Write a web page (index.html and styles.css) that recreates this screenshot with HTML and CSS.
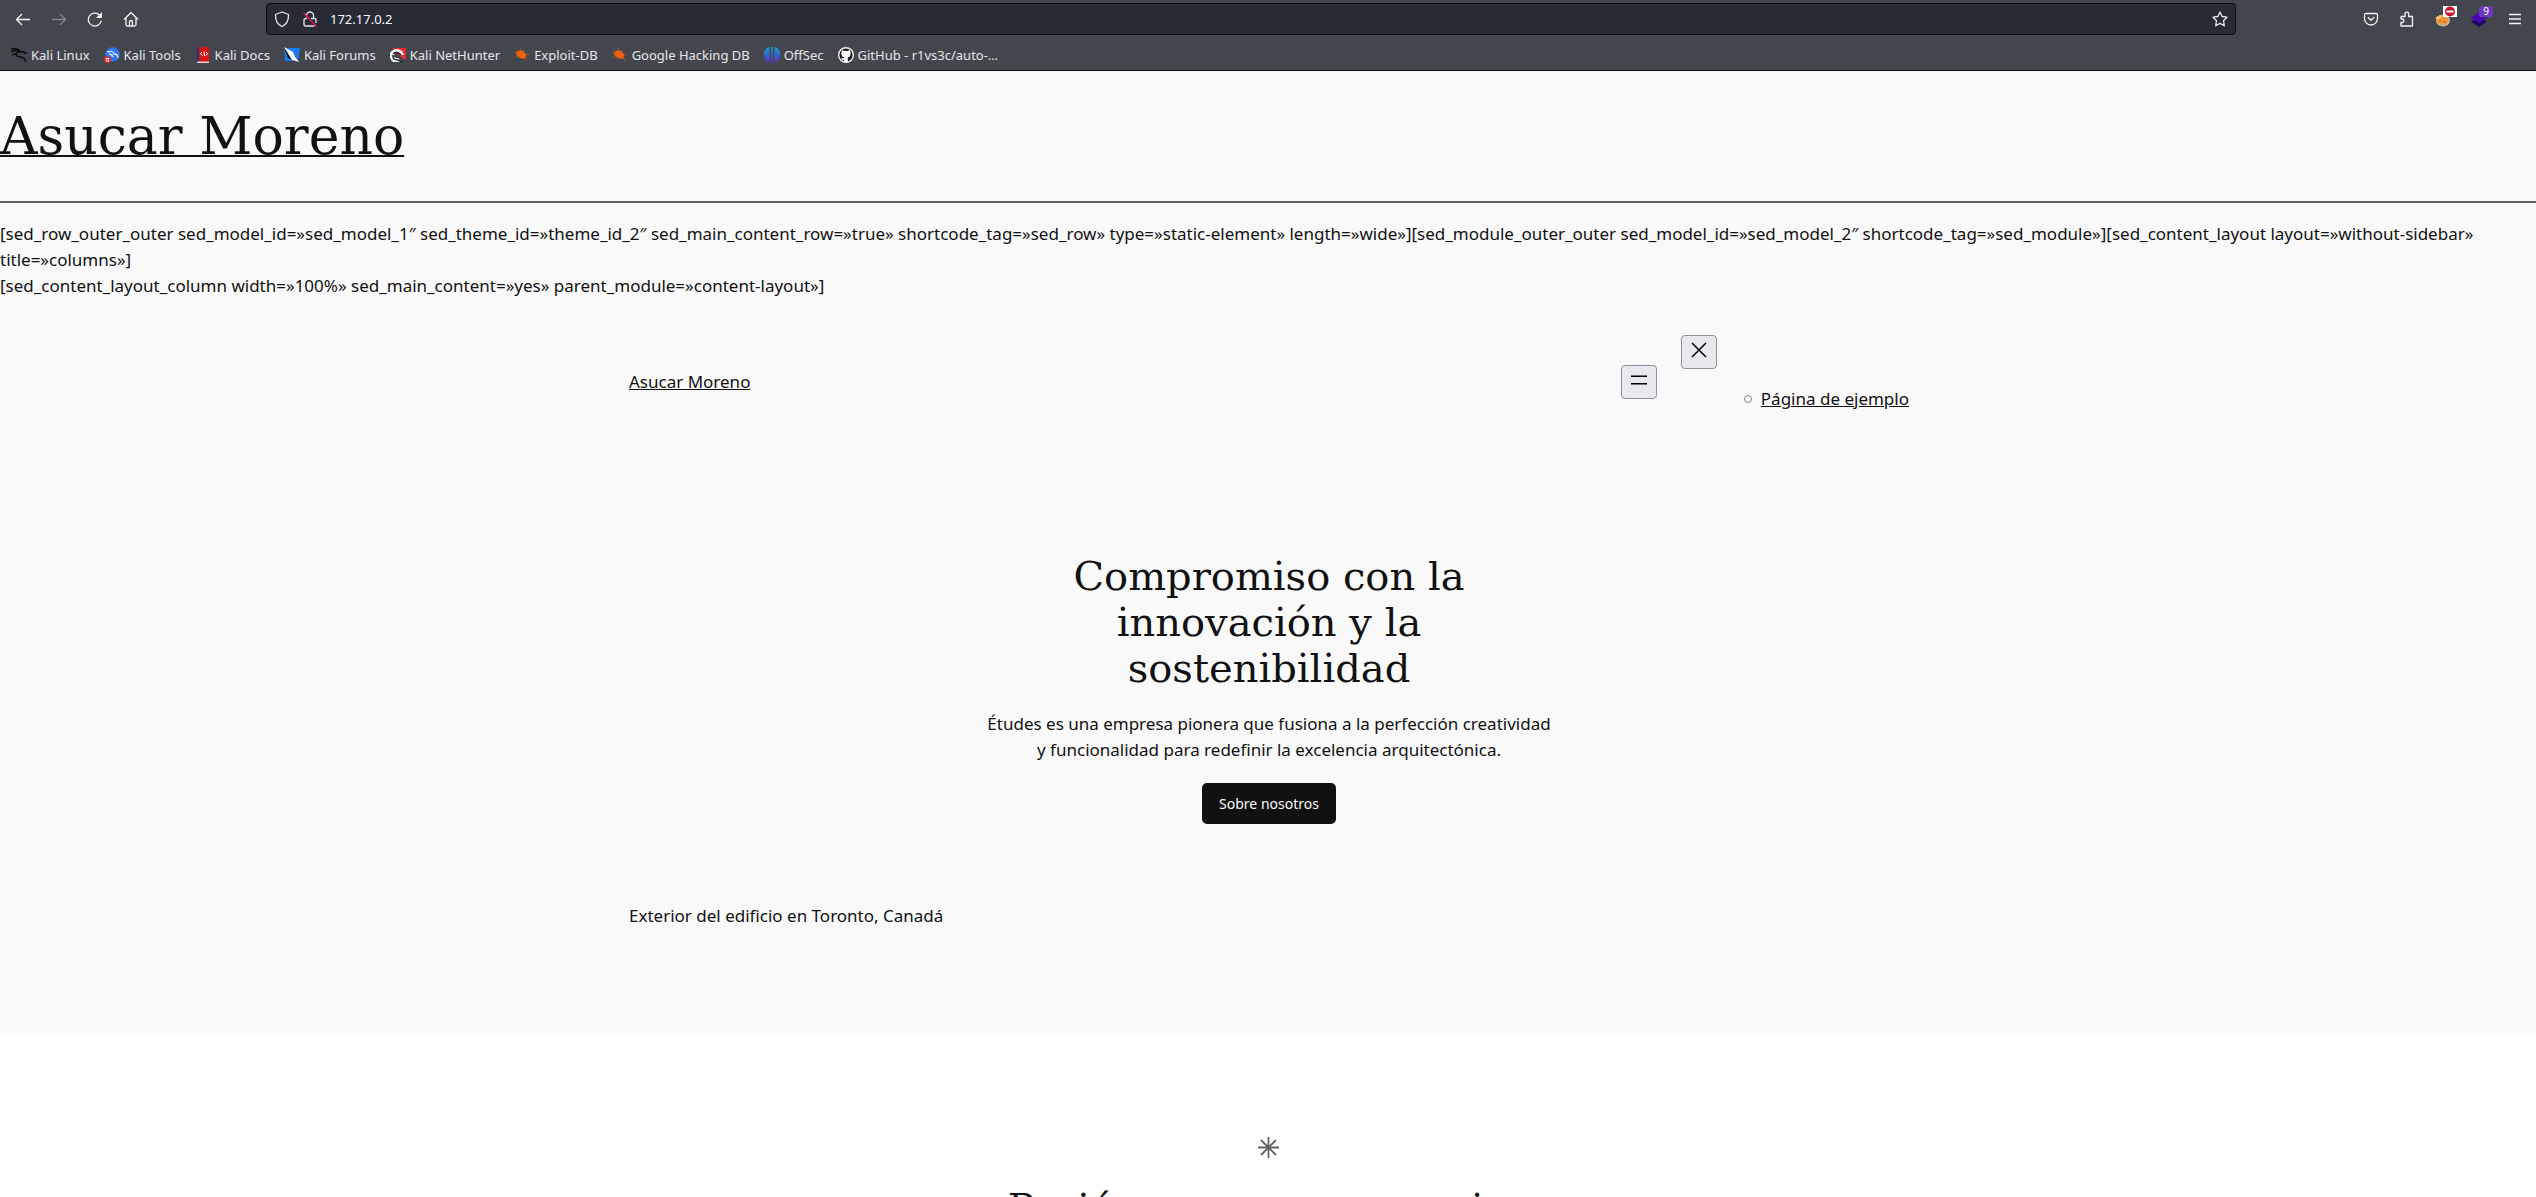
FILE: index.html
```html
<!DOCTYPE html>
<html lang="es">
<head>
<meta charset="utf-8">
<title>Asucar Moreno</title>
<link rel="stylesheet" href="styles.css">
</head>
<body>
<header class="chrome">
  <div class="toolbar">
    <div class="tools">
      <button class="tool" aria-label="Back"><svg class="icon line" viewBox="0 0 16 16"><path d="M15 8.500H2M7 3L1.500 8.500L7 14"/></svg></button>
      <button class="tool dim" aria-label="Forward" disabled><svg class="icon line" viewBox="0 0 16 16"><path d="M1 8.500H14M9 3L14.500 8.500L9 14"/></svg></button>
      <button class="tool" aria-label="Reload"><svg class="icon line" viewBox="0 0 16 16"><path d="M12.500 4A6.500 6.500 0 1 0 14.300 9.500"/><path d="M15 1V7H9Z" fill="currentColor" stroke="none"/></svg></button>
      <button class="tool" aria-label="Home"><svg class="icon line" viewBox="0 0 16 16"><path d="M1 8.500L8 1.500L15 8.500M3 7V13.500Q3 15 4.500 15H11.500Q13 15 13 13.500V7M6.500 15V11Q6.500 9.500 8 9.500T9.500 11V15"/></svg></button>
    </div>
    <div class="urlbar">
      <svg class="icon line" viewBox="0 0 16 16"><path d="M8 1L14.500 3.500C14.800 9.500 12.500 13.500 8 15.500C3.500 13.500 1.200 9.500 1.500 3.500Z"/></svg>
      <svg class="icon line" viewBox="0 0 16 16"><path d="M4.500 4.500A3.500 3.500 0 0 1 11.500 4.500V7M9 7.500H12.500Q14 7.500 14 9V12M12.500 15H3.500Q2 15 2 13.500V9Q2 7.500 3.500 7.500H5"/><path d="M1.500 2L14.500 15.500" stroke="#e2204f"/></svg>
      <input class="url" type="text" aria-label="Address" value="172.17.0.2">
      <svg class="icon line" viewBox="0 0 16 16"><path d="M8 1L10.100 5.500L15 6.200L11.500 9.700L12.300 14.800L8 12.400L3.700 14.800L4.500 9.700L1 6.200L5.900 5.500Z"/></svg>
    </div>
    <div class="tools">
      <button class="tool" aria-label="Pocket"><svg class="icon line" viewBox="0 0 16 16"><path d="M3 2.500H13Q14.500 2.500 14.500 4V7.500A6.500 6.500 0 0 1 1.500 7.500V4Q1.500 2.500 3 2.500ZM4.800 6.200L8 9.200L11.200 6.200"/></svg></button>
      <button class="tool" aria-label="Extensions"><svg class="icon line" viewBox="0 0 16 16"><path d="M2 15V11.500H3.500A1.800 1.800 0 0 0 3.500 8H2V5.500H6V3A1.800 1.800 0 0 1 9.700 3V5.500H13.500V15Z"/></svg></button>
      <button class="tool" aria-label="Cookie extension"><svg class="icon" viewBox="0 0 16 16"><ellipse cx="8" cy="9.500" rx="7" ry="6" fill="#b9b4ae"/><ellipse cx="7.300" cy="9" rx="6.500" ry="5" fill="#f39a3d"/><path d="M0 7L5 4L7 6L3 8Z" fill="#f5c58c"/><path d="M4 10H6M8 11H11M9 8.500H10" stroke="#9a5a20"/></svg>
        <svg class="badge stop" viewBox="0 0 14 11"><rect width="14" height="11" fill="#fff"/><circle cx="7" cy="5.500" r="5" fill="#c4122f"/><rect x="3.500" y="4.500" width="7" height="2" fill="#fff"/></svg></button>
      <button class="tool" aria-label="Layers extension"><svg class="icon" viewBox="0 0 16 16"><path d="M0 10.500L8 5.500L16 10.500L8 16Z" fill="#1c0766"/><path d="M0 6.500L8 1.500L16 6.500L8 12Z" fill="#4a05b5"/></svg><span class="badge count">9</span></button>
      <button class="tool" aria-label="Menu"><svg class="icon line" viewBox="0 0 16 16"><path d="M2 3.500H14M2 8H14M2 12.500H14"/></svg></button>
    </div>
  </div>
  <nav class="bookmarks" aria-label="Bookmarks">
    <a class="bookmark" href="#"><svg class="icon" viewBox="0 0 16 16" fill="none" stroke="#0b0c0e" stroke-width="1.500"><path d="M0 2C5 1 8 2 9 5M0 5C3 3 7 3 9 5Q14 4 15 7M9 5Q4 5 5 8Q6 10 10 10Q14 11 15 15M1 8Q4 6 6 8"/></svg>Kali Linux</a>
    <a class="bookmark" href="#"><svg class="icon" viewBox="0 0 16 16"><circle cx="8.500" cy="7.500" r="7.200" fill="#2f76f0"/><path d="M3 5Q9 3 10 7Q14 7 14 11M5 7Q8 7 9 10" fill="none" stroke="#d8e7ff" stroke-width="1.300"/><circle cx="3.500" cy="12.500" r="3.500" fill="#e22a2a"/><path d="M1.500 11.500H5.500M2.700 11.500V15M4.300 11.500V15" stroke="#fff" stroke-width=".8"/></svg>Kali Tools</a>
    <a class="bookmark" href="#"><svg class="icon" viewBox="0 0 16 16"><path d="M2 0H14V15H2Z" fill="#d31616"/><path d="M2 0H4V15H2Z" fill="#26356f"/><path d="M2 14.500H14V16H2Z" fill="#e9cfcf"/><path d="M7 5L5.500 6.800L7.500 8.500M11 5L12.500 6.800L11 8.500M9 4.500L9.500 9" fill="none" stroke="#fff"/></svg>Kali Docs</a>
    <a class="bookmark" href="#"><svg class="icon" viewBox="0 0 16 16"><path d="M0 1H16L14 14H1Z" fill="#1d7bf2"/><path d="M0 1L7 8L12 15L4 11Z" fill="#111a2a"/><path d="M0 0L9 5L11 10L15 15L8 13L5 8Z" fill="#fff"/></svg>Kali Forums</a>
    <a class="bookmark" href="#"><svg class="icon" viewBox="0 0 16 16"><path d="M2 1H16V13L11 10Z" fill="#e62c35"/><path d="M0 6Q5 -1 12 4L14 8L11 8Q7 3 4 8Q3 11 8 11L12 15H3Q-1 12 0 6Z" fill="#fff"/><path d="M3 7Q7 3 11 8M3 8Q2 13 8 13L12 15" fill="none" stroke="#222" stroke-width="1.500"/></svg>Kali NetHunter</a>
    <a class="bookmark" href="#"><svg class="icon" viewBox="0 0 16 16"><path d="M2 6Q6 1 10 5Q13 7 12 11Q8 13 5 10Q2 9 2 6Z" fill="#f0610f"/><path d="M0 5L4 7M6 1L8 5M10 3L9 6M12 7L15 8M11 9L13 14M3 9L1 11M6 10L4 12M2 3L5 6" stroke="#bd5521" stroke-width=".8"/></svg>Exploit-DB</a>
    <a class="bookmark" href="#"><svg class="icon" viewBox="0 0 16 16"><path d="M2 6Q6 1 10 5Q13 7 12 11Q8 13 5 10Q2 9 2 6Z" fill="#f0610f"/><path d="M0 5L4 7M6 1L8 5M10 3L9 6M12 7L15 8M11 9L13 14M3 9L1 11M6 10L4 12M2 3L5 6" stroke="#bd5521" stroke-width=".8"/></svg>Google Hacking DB</a>
    <a class="bookmark" href="#"><svg class="icon" viewBox="0 0 16 16"><defs><linearGradient id="offsec" x2="0" y2="1"><stop stop-color="#12a3bb"/><stop offset=".6" stop-color="#3b59d8"/><stop offset="1" stop-color="#6328c4"/></linearGradient></defs><path d="M5.500 0V15Q0 14 0 7.500T5.500 0ZM7.200 0H8.800V16H7.200ZM10.500 0Q16 1 16 7.500T10.500 15Z" fill="url(#offsec)"/></svg>OffSec</a>
    <a class="bookmark" href="#"><svg class="icon" viewBox="0 0 16 16"><circle cx="8" cy="8" r="8" fill="#f4f4f4"/><circle cx="8" cy="8" r="6.600" fill="#1b1f23"/><path d="M4 3L6.500 4H9.500L12 3Q13 5 12.500 8Q12 10 9.700 10.500L10 15H6L6 13Q4 13.500 3 11.500L6.200 11L6.300 10.500Q4 10 3.500 8Q3 5 4 3Z" fill="#fff"/></svg>GitHub - r1vs3c/auto-…</a>
  </nav>
</header>
<main class="page">
  <h1 class="site-title"><a href="#">Asucar Moreno</a></h1>
  <hr class="rule">
  <p class="shortcodes">[sed_row_outer_outer sed_model_id=»sed_model_1″ sed_theme_id=»theme_id_2″ sed_main_content_row=»true» shortcode_tag=»sed_row» type=»static-element» length=»wide»][sed_module_outer_outer sed_model_id=»sed_model_2″ shortcode_tag=»sed_module»][sed_content_layout layout=»without-sidebar» title=»columns»]<br>[sed_content_layout_column width=»100%» sed_main_content=»yes» parent_module=»content-layout»]</p>
  <div class="wide site-bar">
    <a href="#">Asucar Moreno</a>
    <nav class="site-nav" aria-label="Principal">
      <button class="nav-button" aria-label="Abrir el menú"><svg class="nav-icon" viewBox="0 0 24 24"><path d="M4 8.250H20M4 15.750H20" stroke="#000" stroke-width="1.500"/></svg></button>
      <div>
        <button class="nav-button" aria-label="Cerrar el menú"><svg class="nav-icon" viewBox="0 0 24 24"><path d="M5 5L19 19M19 5L5 19" stroke="#000" stroke-width="1.500"/></svg></button>
        <ul class="nav-list"><li><a href="#">Página de ejemplo</a></li></ul>
      </div>
    </nav>
  </div>
  <section class="wide hero">
    <div class="intro">
      <h2 class="heading">Compromiso con la innovación y la sostenibilidad</h2>
      <p class="lead">Études es una empresa pionera que fusiona a la perfección creatividad y funcionalidad para redefinir la excelencia arquitectónica.</p>
      <a class="cta" href="#">Sobre nosotros</a>
    </div>
    <p class="caption">Exterior del edificio en Toronto, Canadá</p>
  </section>
  <section class="passion">
    <svg class="star" viewBox="0 0 21 21"><path d="M10.500 0V21M0 10.500H21M3 3L18 18M18 3L3 18" stroke="#636363" stroke-width="1.800"/></svg>
    <h2 class="heading">Pasión por crear espacios</h2>
  </section>
</main>
</body>
</html>
```
FILE: styles.css
```css
* { box-sizing: border-box; }
body {
  margin: 0;
  height: 100vh;
  display: flex;
  flex-direction: column;
  overflow: hidden;
  font: 17px/26px "Noto Sans", sans-serif;
  color: #111;
  background: #f9f9f9;
}
h1, h2, p, ul { margin: 0; font-weight: 400; }
a { color: inherit; }
button { font: inherit; padding: 0; }

/* Browser window */
.chrome {
  flex: none;
  background: #44464d;
  border-bottom: 1px solid #0f1014;
  color: #e6e6ea;
  font-size: 13px;
  line-height: 18px;
}
.toolbar { display: flex; align-items: center; padding: 3px 3px 4px 5px; }
.tools { display: flex; }
.tool {
  position: relative;
  display: grid;
  place-items: center;
  width: 36px;
  height: 32px;
  border: 0;
  background: none;
  color: #f4f4f6;
}
.dim { color: #85868c; }
.icon { display: block; flex: none; width: 16px; height: 16px; }
.line { fill: none; stroke: currentColor; stroke-width: 1.3; stroke-linejoin: round; }
.urlbar {
  flex: 1;
  display: flex;
  align-items: center;
  gap: 12px;
  height: 32px;
  margin: 0 117px;
  padding: 0 7px;
  border: 1px solid #0c0d12;
  border-radius: 4px;
  background: #282a36;
  color: #e6e6ea;
}
.url {
  flex: 1;
  min-width: 0;
  padding: 0;
  border: 0;
  outline: 0;
  background: none;
  color: #fbfbfe;
  font: inherit;
}
.badge { position: absolute; top: 3px; right: 4px; width: 14px; height: 11px; }
.count { border-radius: 2px; background: #6c36bd; color: #fff; font-size: 10px; line-height: 11px; }
.bookmarks { display: flex; gap: 14px; height: 31px; padding: 0 11px; align-items: center; }
.bookmark { display: flex; align-items: center; gap: 4px; text-decoration: none; }

/* Site */
.page { flex: 1; min-height: 0; overflow: hidden; }
.site-title {
  padding: 35px 0;
  font: 52px/60px "DejaVu Serif", serif;
  text-decoration-thickness: 2px;
}
.site-title a { text-decoration-thickness: 2px; }
.rule { margin: 0; border: 0; border-top: 2px solid #606060; }
.shortcodes { padding: 18px 0 36px; }
.wide { max-width: 1282px; margin: 0 auto; padding-left: 2px; }
.site-bar { display: flex; align-items: center; justify-content: space-between; }
.site-nav { display: flex; align-items: center; gap: 24px; }
.nav-button {
  display: block;
  width: 36px;
  height: 34px;
  padding: 2px 5px 6px;
  border: 1px solid #8f8f9d;
  border-radius: 4px;
  background: #e9e9ed;
}
.nav-icon { display: block; width: 24px; height: 24px; }
.nav-list { margin: 17px 0; padding-left: 63px; list-style: none; }
.nav-list li { display: flex; align-items: center; gap: 9px; }
.nav-list li::before {
  content: "";
  width: 6px;
  height: 6px;
  border: 1px solid #888;
  border-radius: 50%;
}
.hero { padding-top: 124px; padding-bottom: 104px; }
.intro {
  display: flex;
  flex-direction: column;
  align-items: center;
  max-width: 564px;
  margin: 0 auto;
  text-align: center;
}
.heading { font: 40px/46px "DejaVu Serif", serif; text-align: center; }
.hero .heading { max-width: 480px; }
.lead { margin: 20px 0; }
.cta {
  padding: 11px 17px 10px;
  border-radius: 5px;
  background: #111;
  color: #f9f9f9;
  font-size: 14px;
  line-height: 20px;
  text-decoration: none;
}
.caption { margin-top: 79px; }
.passion {
  display: flex;
  flex-direction: column;
  align-items: center;
  gap: 27px;
  padding: 104px 0;
  background: #fff;
}
.star { width: 21px; height: 21px; }
```
